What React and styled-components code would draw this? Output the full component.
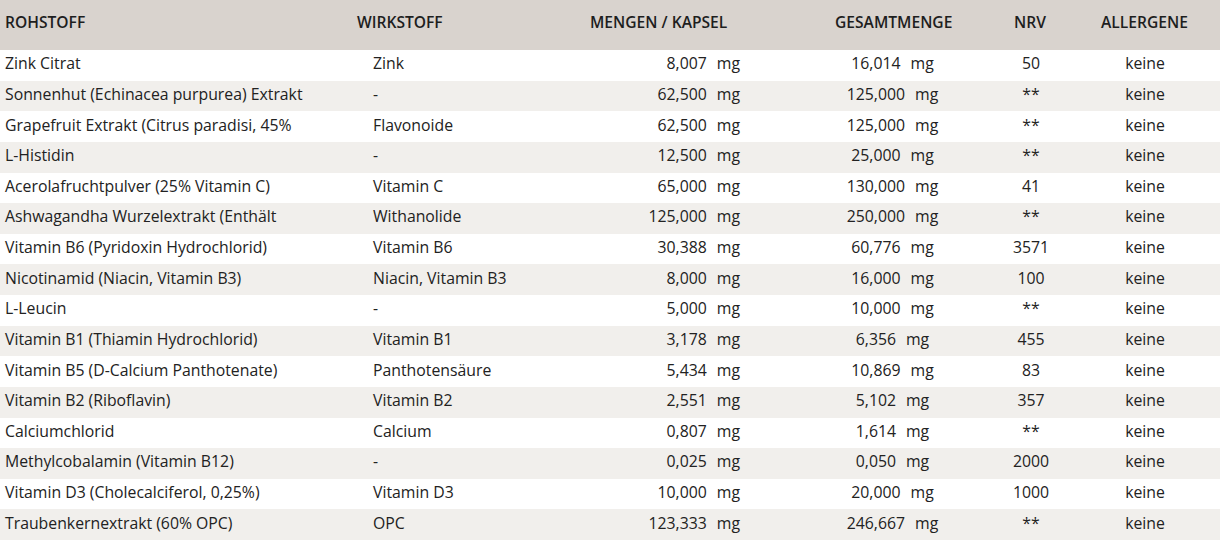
import React from "react";
import styled, { createGlobalStyle } from "styled-components";

const Global = createGlobalStyle`
  html, body { margin: 0; padding: 0; background: #ffffff; }
  body { font-family: "Open Sans", "Liberation Sans", sans-serif; color: #222; }
`;

const rows = [
  ["Zink Citrat", "Zink", "8,007", "16,014", "50"],
  ["Sonnenhut (Echinacea purpurea) Extrakt", "-", "62,500", "125,000", "**"],
  ["Grapefruit Extrakt (Citrus paradisi, 45%", "Flavonoide", "62,500", "125,000", "**"],
  ["L-Histidin", "-", "12,500", "25,000", "**"],
  ["Acerolafruchtpulver (25% Vitamin C)", "Vitamin C", "65,000", "130,000", "41"],
  ["Ashwagandha Wurzelextrakt (Enthält", "Withanolide", "125,000", "250,000", "**"],
  ["Vitamin B6 (Pyridoxin Hydrochlorid)", "Vitamin B6", "30,388", "60,776", "3571"],
  ["Nicotinamid (Niacin, Vitamin B3)", "Niacin, Vitamin B3", "8,000", "16,000", "100"],
  ["L-Leucin", "-", "5,000", "10,000", "**"],
  ["Vitamin B1 (Thiamin Hydrochlorid)", "Vitamin B1", "3,178", "6,356", "455"],
  ["Vitamin B5 (D-Calcium Panthotenate)", "Panthotensäure", "5,434", "10,869", "83"],
  ["Vitamin B2 (Riboflavin)", "Vitamin B2", "2,551", "5,102", "357"],
  ["Calciumchlorid", "Calcium", "0,807", "1,614", "**"],
  ["Methylcobalamin (Vitamin B12)", "-", "0,025", "0,050", "2000"],
  ["Vitamin D3 (Cholecalciferol, 0,25%)", "Vitamin D3", "10,000", "20,000", "1000"],
  ["Traubenkernextrakt (60% OPC)", "OPC", "123,333", "246,667", "**"],
];

const Table = styled.div`
  width: 1220px;
  display: flex;
  flex-direction: column;
`;

const Header = styled.div`
  height: 50px;
  background: #d9d3ce;
  display: grid;
  grid-template-columns: 357px 233px 245px 179px 87px 1fr;
  padding-top: 12px;
  box-sizing: border-box;
`;

const HeadCell = styled.div`
  font-size: 15.6px;
  font-weight: 600;
  color: #1e1e1e;
  padding-left: ${(p) => (p.$first ? "5px" : "0")};
  line-height: 20px;
  white-space: nowrap;
`;

const Row = styled.div`
  height: 30.625px;
  box-sizing: border-box;
  padding-bottom: 4px;
  display: grid;
  grid-template-columns: 368px 192px 215px 235px 42px 1fr;
  align-items: center;
  background: ${(p) => (p.$alt ? "#f1efec" : "#ffffff")};
  font-size: 15.8px;
  color: #222;
`;

const Cell = styled.div`
  white-space: nowrap;
  text-align: ${(p) => p.$align || "left"};
  padding-left: ${(p) => p.$pl || "0"};
  padding-right: ${(p) => p.$pr || "0"};
  line-height: 20px;
`;

const Unit = styled.span`
  margin-left: 10px;
`;

export default function App() {
  return (
    <>
      <Global />
      <Table>
        <Header>
          <HeadCell $first>ROHSTOFF</HeadCell>
          <HeadCell>WIRKSTOFF</HeadCell>
          <HeadCell>MENGEN / KAPSEL</HeadCell>
          <HeadCell>GESAMTMENGE</HeadCell>
          <HeadCell>NRV</HeadCell>
          <HeadCell>ALLERGENE</HeadCell>
        </Header>
        {rows.map((r, i) => (
          <Row key={i} $alt={i % 2 === 1}>
            <Cell $pl="5px">{r[0]}</Cell>
            <Cell $pl="5px">{r[1]}</Cell>
            <Cell $align="right" $pr="35px">
              {r[2]}
              <Unit>mg</Unit>
            </Cell>
            <Cell $align="center">
              {r[3]}
              <Unit>mg</Unit>
            </Cell>
            <Cell $align="center">{r[4]}</Cell>
            <Cell $align="center" $pl="18px">keine</Cell>
          </Row>
        ))}
      </Table>
    </>
  );
}
